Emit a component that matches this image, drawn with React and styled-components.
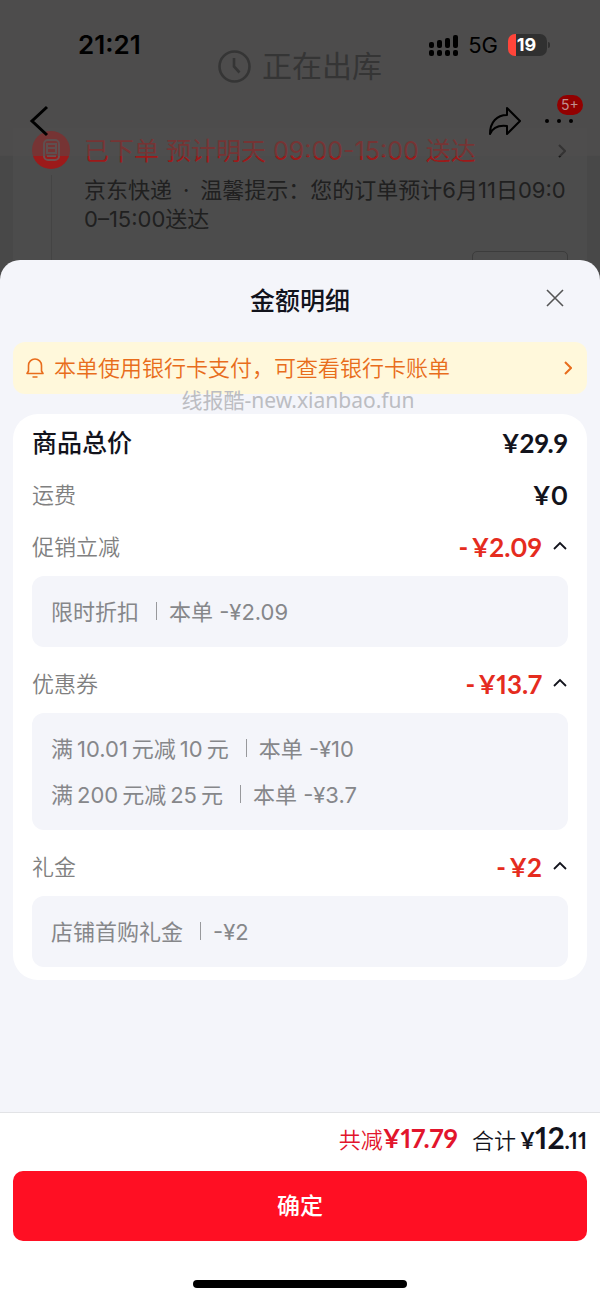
import React, { useState } from 'react'
import styled, { createGlobalStyle } from 'styled-components'

const GlobalStyle = createGlobalStyle`
  * {
    box-sizing: border-box;
  }
  body {
    margin: 0;
    background: #4b4b4b;
    color: #12131c;
    font-family: Inter, 'Noto Sans CJK SC', sans-serif;
    font-size: 22px;
    line-height: 30px;
  }
  button {
    border: 0;
    padding: 0;
    background: none;
    color: inherit;
    font: inherit;
    cursor: pointer;
  }
  h1, h2, p, ul {
    margin: 0;
    padding: 0;
    font-size: inherit;
    font-weight: inherit;
  }
  svg {
    display: block;
  }
`

const Screen = styled.div`
  display: flex;
  flex-direction: column;
  min-height: 100vh;
`

/* order page behind the sheet */

const OrderPage = styled.header`
  position: relative;
  height: 260px;
  padding: 128px 13px 0;
  overflow: hidden;
  background: linear-gradient(#4b4b4b 155px, #484848 155px);
`

const OrderCard = styled.div`
  display: grid;
  grid-template-columns: 38px 1fr;
  column-gap: 14px;
  height: 132px;
  padding: 0 19px;
  background: #4c4c4c;
`

const Timeline = styled.div`
  display: flex;
  flex-direction: column;
  align-items: center;
  gap: 6px;
  padding-top: 3px;
`

const TimelineRule = styled.span`
  width: 1px;
  flex: 1;
  background: #444444;
`

const OrderTitle = styled.a`
  display: flex;
  align-items: center;
  justify-content: space-between;
  height: 46px;
  padding-right: 2px;
  color: #9c1a1a;
  font-size: 25px;
  text-decoration: none;
  white-space: nowrap;

  svg {
    color: #181818;
  }
`

const OrderText = styled.p`
  margin-right: -4px;
  padding-top: 2px;
  color: #202020;
  font-size: 22px;
  line-height: 29px;
  word-break: break-all;
`

const OrderAction = styled.div`
  width: 96px;
  height: 30px;
  margin: 17px 0 0 auto;
  border: 1px solid #3c3c3c;
  border-radius: 5px;
`

const NavOverlay = styled.div`
  position: absolute;
  top: 0;
  left: 0;
  right: 0;
  height: 156px;
  background: rgba(80, 78, 78, 0.5);
`

const StatusBar = styled.div`
  display: flex;
  align-items: center;
  justify-content: space-between;
  height: 90px;
  padding: 0 53px 0 78px;
  color: #000;
`

const Clock = styled.span`
  font-size: 26px;
  font-weight: 600;
`

const StatusIcons = styled.div`
  display: flex;
  align-items: center;
  gap: 10px;
  font-size: 22px;
`

const Battery = styled.span`
  position: relative;
  width: 39px;
  padding-right: 2px;
  border-radius: 7px;
  background: linear-gradient(90deg, #ff453a 8px, #303030 8px);
  color: #fff;
  font-size: 18px;
  font-weight: 700;
  line-height: 22px;
  text-align: center;

  &::after {
    content: '';
    position: absolute;
    top: 8px;
    right: -3px;
    width: 2px;
    height: 6px;
    border-radius: 0 2px 2px 0;
    background: #303030;
  }
`

const PageState = styled.h1`
  position: absolute;
  top: 46px;
  left: 0;
  right: 0;
  display: flex;
  align-items: center;
  justify-content: center;
  gap: 11px;
  color: #353535;
  font-size: 30px;
  line-height: 40px;
`

const NavRow = styled.nav`
  display: flex;
  align-items: center;
  justify-content: space-between;
  height: 62px;
  padding: 0 27px 0 29px;
  color: #000;
`

const NavActions = styled.div`
  display: flex;
  align-items: center;
  gap: 23px;
`

const MoreButton = styled.button`
  position: relative;
`

const Badge = styled.span`
  position: absolute;
  top: -24px;
  right: -10px;
  width: 26px;
  border-radius: 10px;
  background: #920000;
  color: #c09090;
  font-size: 14px;
  line-height: 20px;
  text-align: center;
`

/* sheet */

const Sheet = styled.main`
  display: flex;
  flex: 1;
  flex-direction: column;
  border-radius: 20px 20px 0 0;
  background: #f4f5fa;
`

const SheetHeader = styled.div`
  display: grid;
  grid-template-columns: 1fr auto 1fr;
  align-items: center;
  height: 82px;
  padding: 0 36px;
`

const SheetTitle = styled.h2`
  grid-column: 2;
  font-size: 25px;
  font-weight: 500;
`

const CloseButton = styled.button`
  justify-self: end;
  padding-bottom: 6px;
`

const Notice = styled.a`
  display: flex;
  align-items: center;
  gap: 10px;
  height: 52px;
  margin: 0 13px;
  padding: 0 15px 0 13px;
  border-radius: 12px;
  background: #fff8db;
  color: #e86d1c;
  font-weight: 350;
  text-decoration: none;

  span {
    flex: 1;
  }
`

const Watermark = styled.p`
  height: 20px;
  padding-right: 4px;
  color: #bcbdc2;
  font-family: 'Noto Sans', 'Noto Sans CJK SC', sans-serif;
  font-size: 21px;
  line-height: 12px;
  text-align: center;
`

const PriceCard = styled.section`
  margin: 0 13px;
  padding: 3px 19px 2px;
  border-radius: 25px;
  background: #fff;
`

const PriceRow = styled.div`
  display: flex;
  align-items: center;
  justify-content: space-between;
  height: 52px;
`

const Label = styled.span`
  color: ${props => props.$strong ? '#12131c' : '#808080'};
  font-size: ${props => props.$strong ? '25px' : '22px'};
  font-weight: ${props => props.$strong ? 500 : 350};
`

const Amount = styled.span`
  font-family: Lato, 'Noto Sans CJK SC', sans-serif;
  font-size: ${props => props.$size || '26px'};
  font-weight: 700;
  font-variant-numeric: proportional-nums;
`

const ToggleButton = styled.button`
  display: flex;
  align-items: center;
  gap: 10px;
  color: #e52c1e;
`

const DetailBox = styled.ul`
  margin: 3px 0 11px;
  padding: 13px 19px 12px;
  border-radius: 12px;
  background: #f4f5fa;
  color: #86878a;
  line-height: 46px;
  list-style: none;
`

const Divider = styled.span`
  display: inline-block;
  width: 1px;
  height: 18px;
  margin: 0 12px 0 17px;
  background: #98999c;
`

const Footer = styled.footer`
  margin-top: auto;
  padding: 0 13px 12px;
  border-top: 1px solid #e2e3e6;
  background: #fff;
`

const Summary = styled.div`
  display: flex;
  align-items: center;
  justify-content: flex-end;
  gap: 14px;
  height: 58px;
  padding-bottom: 7px;
`

const SummaryItem = styled.span`
  display: flex;
  align-items: baseline;
  gap: ${props => props.$gap || '0'};
  color: ${props => props.$red ? '#e2152c' : '#12131c'};
  font-weight: 350;
`

const ConfirmButton = styled.button`
  display: block;
  width: 100%;
  height: 70px;
  border-radius: 10px;
  background: #ff0f23;
  color: #fff;
  font-size: 23px;
  font-weight: 500;
`

const HomeIndicator = styled.div`
  width: 214px;
  height: 8px;
  margin: 39px auto 0;
  border-radius: 4px;
  background: #000;
`

// numbers inside the titles are set off with thin spaces
const groups = [
  {
    name: '促销立减',
    amount: '¥2.09',
    items: [{ title: '限时折扣', value: '本单 -¥2.09' }],
  },
  {
    name: '优惠券',
    amount: '¥13.7',
    items: [
      { title: '满\u200910.01\u2009元减\u200910\u2009元', value: '本单 -¥10' },
      { title: '满\u2009200\u2009元减\u200925\u2009元', value: '本单 -¥3.7' },
    ],
  },
  {
    name: '礼金',
    amount: '¥2',
    items: [{ title: '店铺首购礼金', value: '-¥2' }],
  },
]

const Chevron = () => (
  <svg width="8" height="14" fill="none" stroke="currentColor" strokeWidth="2">
    <path d="M1 1l6 6-6 6" />
  </svg>
)

const OrderIcon = () => (
  <svg width="38" height="38" viewBox="0 0 38 38" fill="none">
    <circle cx="19" cy="19" r="19" fill="#9c1a1a" />
    <rect x="12" y="9" width="15" height="20" rx="4" stroke="#6e5050" strokeWidth="2" />
    <path d="M15 13h9v9h-9zM16 17h7M15 25h9" stroke="#6e5050" strokeWidth="2" />
  </svg>
)

const ClockIcon = () => (
  <svg width="33" height="33" viewBox="0 0 33 33" fill="none" stroke="currentColor" strokeWidth="2.6">
    <circle cx="16.5" cy="16.5" r="15" />
    <path d="M16 8v8.5l5.5 6" />
  </svg>
)

const SignalIcon = () => (
  <svg width="29" height="21" viewBox="0 0 29 21" fill="#000">
    <rect x="0" y="7" width="5" height="6" rx="2" />
    <rect x="8" y="5" width="5" height="8" rx="2" />
    <rect x="16" y="3" width="5" height="10" rx="2" />
    <rect x="24" y="0" width="5" height="13" rx="2" />
    <rect x="0" y="15" width="5" height="6" rx="2" />
    <rect x="8" y="15" width="5" height="6" rx="2" />
    <rect x="16" y="15" width="5" height="6" rx="2" />
    <rect x="24" y="15" width="5" height="6" rx="2" />
  </svg>
)

const BackIcon = () => (
  <svg width="20" height="32" viewBox="0 0 20 32" fill="none" stroke="currentColor" strokeWidth="3">
    <path d="M18 2 3 16l15 14" />
  </svg>
)

const ShareIcon = () => (
  <svg width="34" height="30" viewBox="0 0 34 30" fill="none" stroke="currentColor" strokeWidth="2" strokeLinejoin="round">
    <path d="M19 2l13 13-13 13v-8C11 19 5 21 2 28 2 16 9 9 19 9z" />
  </svg>
)

const BellIcon = () => (
  <svg width="18" height="20" viewBox="0 0 18 20" fill="none" stroke="currentColor" strokeWidth="1.6" strokeLinejoin="round">
    <path d="M2.5 7.5a6.5 6.5 0 0 1 13 0V13l1.500 2.500H1L2.500 13zM6.5 19h5" />
  </svg>
)

const DiscountGroup = ({ group }) => {
  const [open, setOpen] = useState(true)

  return (
    <div>
      <PriceRow>
        <Label>{group.name}</Label>
        <ToggleButton aria-expanded={open} onClick={() => setOpen(!open)}>
          <Amount>-&thinsp;{group.amount}</Amount>
          <svg width="16" height="14" viewBox="0 0 16 14" fill="none" stroke="#12131c" strokeWidth="1.8">
            <path d={open ? 'M2 9l6-6 6 6' : 'M2 3l6 6 6-6'} />
          </svg>
        </ToggleButton>
      </PriceRow>
      {open && (
        <DetailBox>
          {group.items.map(item => (
            <li key={item.title}>{item.title}<Divider />{item.value}</li>
          ))}
        </DetailBox>
      )}
    </div>
  )
}

const App = () => {
  return (
    <Screen>
      <GlobalStyle />
      <OrderPage>
        <OrderCard>
          <Timeline>
            <OrderIcon />
            <TimelineRule />
          </Timeline>
          <div>
            <OrderTitle href="#order">
              已下单 预计明天 09:00-15:00 送达
              <Chevron />
            </OrderTitle>
            <OrderText>京东快递&ensp;·&ensp;温馨提示：您的订单预计6月11日09:00–15:00送达</OrderText>
            <OrderAction />
          </div>
        </OrderCard>
        <NavOverlay>
          <PageState><ClockIcon />正在出库</PageState>
          <StatusBar>
            <Clock>21:21</Clock>
            <StatusIcons>
              <SignalIcon />
              5G
              <Battery>19</Battery>
            </StatusIcons>
          </StatusBar>
          <NavRow>
            <button aria-label="返回"><BackIcon /></button>
            <NavActions>
              <button aria-label="分享"><ShareIcon /></button>
              <MoreButton aria-label="更多">
                <svg width="28" height="4" fill="#000">
                  <circle cx="2" cy="2" r="2" />
                  <circle cx="14" cy="2" r="2" />
                  <circle cx="26" cy="2" r="2" />
                </svg>
                <Badge>5+</Badge>
              </MoreButton>
            </NavActions>
          </NavRow>
        </NavOverlay>
      </OrderPage>

      <Sheet>
        <SheetHeader>
          <SheetTitle>金额明细</SheetTitle>
          <CloseButton aria-label="关闭">
            <svg width="18" height="18" fill="none" stroke="#555" strokeWidth="1.6">
              <path d="M1 1l16 16M17 1 1 17" />
            </svg>
          </CloseButton>
        </SheetHeader>
        <Notice href="#bill">
          <BellIcon />
          <span>本单使用银行卡支付，可查看银行卡账单</span>
          <Chevron />
        </Notice>
        <Watermark>线报酷-new.xianbao.fun</Watermark>
        <PriceCard>
          <PriceRow>
            <Label $strong>商品总价</Label>
            <Amount>¥29.9</Amount>
          </PriceRow>
          <PriceRow>
            <Label>运费</Label>
            <Amount>¥0</Amount>
          </PriceRow>
          {groups.map(group => <DiscountGroup key={group.name} group={group} />)}
        </PriceCard>
        <Footer>
          <Summary>
            <SummaryItem $red>共减<Amount>¥17.79</Amount></SummaryItem>
            <SummaryItem $gap="4px">
              合计
              <Amount $size="22px">¥<Amount $size="30px">12</Amount>.11</Amount>
            </SummaryItem>
          </Summary>
          <ConfirmButton>确定</ConfirmButton>
          <HomeIndicator />
        </Footer>
      </Sheet>
    </Screen>
  )
}

export default App
